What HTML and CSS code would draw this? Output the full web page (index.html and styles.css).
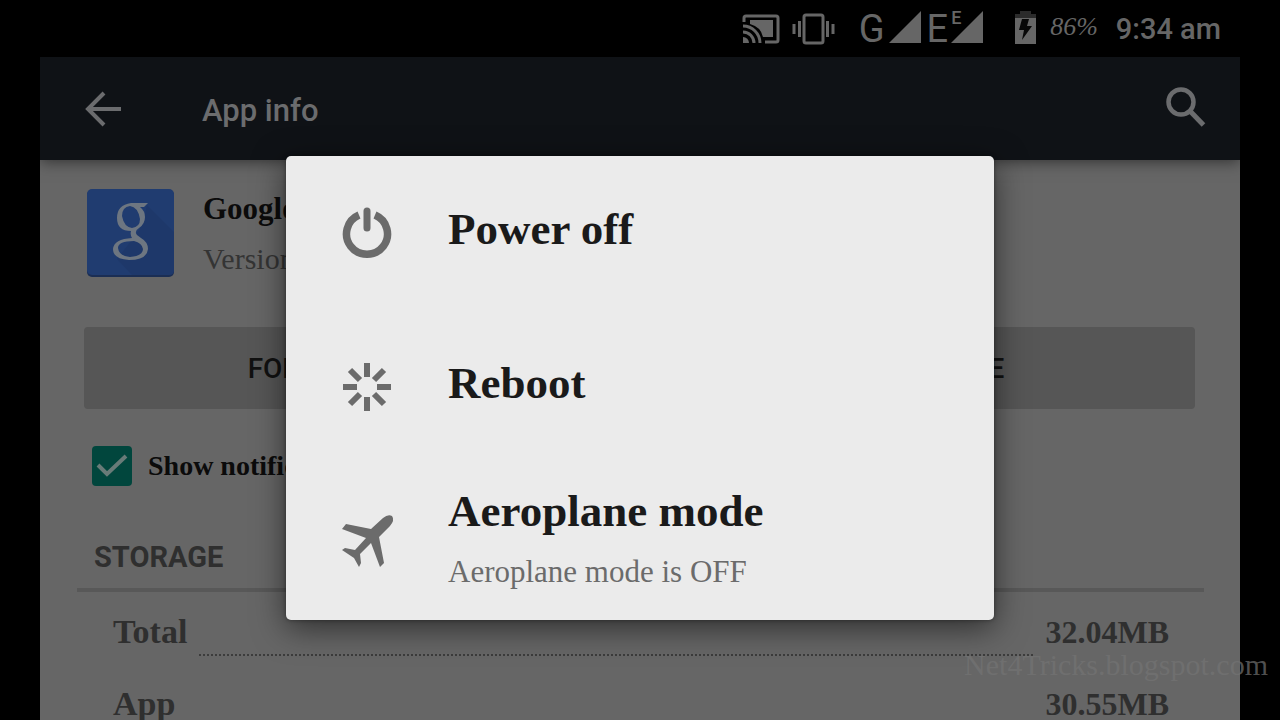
FILE: index.html
```html
<!DOCTYPE html>
<html lang="en">
<head>
<meta charset="utf-8">
<meta name="viewport" content="width=device-width, initial-scale=1">
<title>App info</title>
<link rel="stylesheet" href="styles.css">
</head>
<body>
<div class="screen">
  <div class="status">
    <svg class="cast" width="38" height="30" viewBox="0 0 38 30" fill="none" stroke="currentColor" stroke-width="3">
      <path d="M2 8V4Q2 2 4 2H34Q36 2 36 4V26Q36 28 34 28H23"/>
      <path d="M8 6H31V23H21Q19 13 8 10Z" fill="currentColor" stroke="none"/>
      <path d="M1 12A17 17 0 0 1 18 29M1 18A11 11 0 0 1 12 29"/>
      <path d="M1 23A6 6 0 0 1 7 29H1Z" fill="currentColor" stroke="none"/>
    </svg>
    <svg class="vibrate" width="43" height="32" viewBox="0 0 43 32" fill="none" stroke="currentColor" stroke-width="3">
      <rect x="12" y="2" width="19" height="28" rx="2"/>
      <path d="M7.500 8V24M2 11V21M35.500 8V24M41 11V21"/>
    </svg>
    <span class="net">G</span>
    <svg class="signal" width="32" height="32" viewBox="0 0 32 32"><path d="M0 32L32 0V32Z" fill="currentColor"/></svg>
    <span class="net net-e">E</span>
    <span class="data">
      <svg width="32" height="32" viewBox="0 0 32 32"><path d="M0 32L15 17L32 0V32Z" fill="currentColor"/></svg>
      <span class="data-type">E</span>
    </span>
    <svg class="battery" width="21" height="33" viewBox="0 0 21 33">
      <path d="M0 3H5V0H16V3H21V8H0Z" fill="#2b2b2b"/>
      <path d="M0 7H21V33H0Z" fill="currentColor"/>
      <path d="M7 8H14L12 15H17L7 29L9 19H4Z" fill="#080808"/>
    </svg>
    <span class="percent">86%</span>
    <span class="clock">9:34 am</span>
  </div>

  <div class="app">
    <header class="toolbar">
      <button class="icon-button" aria-label="Back">
        <svg width="36" height="36" viewBox="0 0 36 36" fill="none" stroke="currentColor" stroke-width="4"><path d="M36 18H3M19 2L3 18L19 34"/></svg>
      </button>
      <h1 class="toolbar-title">App info</h1>
      <button class="icon-button" aria-label="Search">
        <svg width="40" height="42" viewBox="0 0 40 42" fill="none" stroke="currentColor"><circle cx="15" cy="14" r="12.500" stroke-width="4.500"/><path d="M24 23L37.500 37" stroke-width="5"/></svg>
      </button>
    </header>

    <main class="content">
      <section class="summary">
        <svg class="logo" width="87" height="88" viewBox="0 0 87 88">
          <rect y="1" width="87" height="87" rx="5" fill="#1b2e54"/>
          <rect width="87" height="86" rx="5" fill="#203c70"/>
          <path d="M60 16L87 43V81Q87 86 82 86H45L30 70L48 47L56 35Z" fill="#1e386a"/>
          <path fill="#6d7681" fill-rule="evenodd" d="M44 14H61L57 18H53Q58 22 58 28Q58 35 52 39Q47 42 50 46L54 49Q61 53 61 60Q60 71 42 71Q26 70 26 60Q27 50 45 49Q43 46 44 42Q30 42 30 29Q30 16 44 14ZM43 17Q35 18 35 27Q37 38 45 39Q53 38 53 30Q51 18 43 17ZM47 52Q31 52 31 59Q32 67 43 68Q56 67 56 60Q55 54 47 52Z"/>
        </svg>
        <div>
          <div class="app-name">Google App</div>
          <div class="app-version">Version 4.1</div>
        </div>
      </section>

      <div class="actions">
        <button class="action">FORCE STOP</button>
        <button class="action">DISABLE</button>
      </div>

      <label class="notify">
        <input class="check" type="checkbox" checked>
        <span>Show notifications</span>
      </label>

      <h2 class="section-title">STORAGE</h2>
      <dl class="storage">
        <div class="line"><dt>Total</dt><dd class="dots"></dd><dd>32.04MB</dd></div>
        <div class="line"><dt>App</dt><dd class="dots"></dd><dd>30.55MB</dd></div>
      </dl>
    </main>
  </div>

  <div class="overlay">
    <div class="dialog" role="dialog" aria-label="Power options">
      <button class="option">
        <svg width="50" height="52" viewBox="0 0 50 52" fill="none" stroke="currentColor">
          <path d="M17 8A20.500 20.500 0 1 0 33 8" stroke-width="7.500"/>
          <path d="M25 4V21" stroke-width="7" stroke-linecap="round"/>
        </svg>
        <span class="option-text"><span class="option-title">Power off</span></span>
      </button>
      <button class="option">
        <svg width="50" height="50" viewBox="0 0 50 50" stroke="currentColor" stroke-width="6">
          <path d="M25 1V15M25 35V49M1 25H15M35 25H49M8 8L18 18M32 32L42 42M42 8L32 18M18 32L8 42"/>
        </svg>
        <span class="option-text"><span class="option-title">Reboot</span></span>
      </button>
      <button class="option">
        <svg width="50" height="52" viewBox="0 0 50 52" fill="currentColor">
          <path d="M50 1Q53 5 48 11L37 22L42 48L38 52L29 28L18 39L19 48L17 52L12 43L0 35L3 33L13 35L24 23L0 14L4 9L29 14L41 3Q46-1 50 1Z"/>
        </svg>
        <span class="option-text">
          <span class="option-title">Aeroplane mode</span>
          <span class="option-note">Aeroplane mode is OFF</span>
        </span>
      </button>
    </div>
  </div>
  <div class="watermark">Net4Tricks.blogspot.com</div>
</div>
</body>
</html>
```
FILE: styles.css
```css
* { box-sizing: border-box; }

body {
  margin: 0;
  background: #000;
  font-family: "Liberation Serif", serif;
}

button {
  border: 0;
  padding: 0;
  background: none;
  color: inherit;
  font: inherit;
}

svg { display: block; flex: none; overflow: visible; }

.screen {
  position: relative;
  display: flex;
  flex-direction: column;
  height: 100vh;
  overflow: hidden;
}

.status {
  display: flex;
  flex: none;
  align-items: center;
  justify-content: flex-end;
  height: 57px;
  padding-right: 59px;
  color: #666;
  font-family: Roboto, sans-serif;
}

.vibrate { margin-left: 12px; }

.net {
  margin-left: 24px;
  font-size: 38px;
  line-height: 56px;
}

.net-e { margin-left: 6px; }

.signal { margin-left: 4px; margin-bottom: 4px; }

.data { position: relative; margin: 0 32px 4px 3px; }

.data-type {
  position: absolute;
  top: -2px;
  left: 0;
  font-size: 18px;
  font-weight: 500;
  line-height: 18px;
}

.battery { margin-bottom: 3px; }

.percent {
  margin: 0 18px 4px 14px;
  font: italic 26px "Liberation Serif", serif;
}

.clock { font-size: 29px; font-weight: 500; }

.app {
  flex: 1;
  min-height: 0;
  margin: 0 40px;
  background: #666;
  overflow: hidden;
}

.toolbar {
  position: relative;
  display: flex;
  align-items: center;
  height: 103px;
  padding: 0 34px 0 45px;
  background: #0f1216;
  box-shadow: 0 2px 14px rgba(0, 0, 0, 0.5);
  color: #6b6c6e;
}

.toolbar-title {
  flex: 1;
  margin: 4px 0 0 81px;
  font: 500 31px Roboto, sans-serif;
}

.content { padding: 29px 36px 0 37px; }

.summary {
  display: flex;
  gap: 29px;
  height: 88px;
  padding-left: 10px;
}

.app-name {
  color: #0b0b0b;
  font-size: 31px;
  font-weight: bold;
  line-height: 40px;
}

.app-version {
  margin-top: 10px;
  color: #343434;
  font-size: 30px;
  line-height: 40px;
}

.actions {
  display: grid;
  grid-template-columns: 1fr 1fr;
  gap: 128px;
  margin: 50px 9px 0 7px;
  border-radius: 4px;
  background: #565656;
}

.action {
  height: 82px;
  color: #111;
  font: 500 28px Roboto, sans-serif;
}

.notify {
  display: flex;
  align-items: center;
  gap: 16px;
  margin: 37px 0 0 15px;
  color: #0b0b0b;
  font-size: 28px;
  font-weight: bold;
}

.check {
  width: 40px;
  height: 40px;
  margin: 0;
  appearance: none;
  border-radius: 4px;
  background: #01463d url("data:image/svg+xml,%3Csvg xmlns='http://www.w3.org/2000/svg' viewBox='0 0 40 40'%3E%3Cpath d='M6 19L15 28L34 10' fill='none' stroke='%23687b78' stroke-width='4'/%3E%3C/svg%3E");
}

.section-title {
  margin: 51px 0 0;
  padding: 0 0 10px 17px;
  border-bottom: 4px solid #585858;
  color: #2f2f2f;
  font: bold 29px/41px Roboto, sans-serif;
}

.storage {
  margin: 4px 35px 0 36px;
  color: #2f2f2f;
  font-size: 34px;
  font-weight: bold;
}

.line {
  display: flex;
  gap: 12px;
  line-height: 72px;
}

.line dd { margin: 0; font-size: 32px; }

.line .dots {
  flex: 1;
  height: 60px;
  border-bottom: 2px dotted #3c3c3c;
}

.overlay {
  position: absolute;
  inset: 55px 0 0;
  display: grid;
  place-items: center;
}

.dialog {
  display: flex;
  flex-direction: column;
  width: 56%;
  max-width: 708px;
  padding-bottom: 2px;
  border-radius: 5px;
  background: #ebebeb;
  box-shadow: 0 8px 32px rgba(0, 0, 0, 0.55), 0 0 4px rgba(0, 0, 0, 0.4);
}

.option {
  display: flex;
  align-items: center;
  gap: 56px;
  height: 154px;
  padding-left: 56px;
  color: #6b6b6b;
  text-align: left;
}

.option-text {
  display: flex;
  flex-direction: column;
  padding-bottom: 8px;
}

.option-title {
  color: #1a1a1a;
  font-size: 45px;
  font-weight: bold;
  line-height: 70px;
}

.option-note { font-size: 31px; line-height: 52px; }

.watermark {
  position: absolute;
  right: 12px;
  bottom: 38px;
  color: rgba(116, 116, 116, 0.69);
  font-size: 30px;
}
```
